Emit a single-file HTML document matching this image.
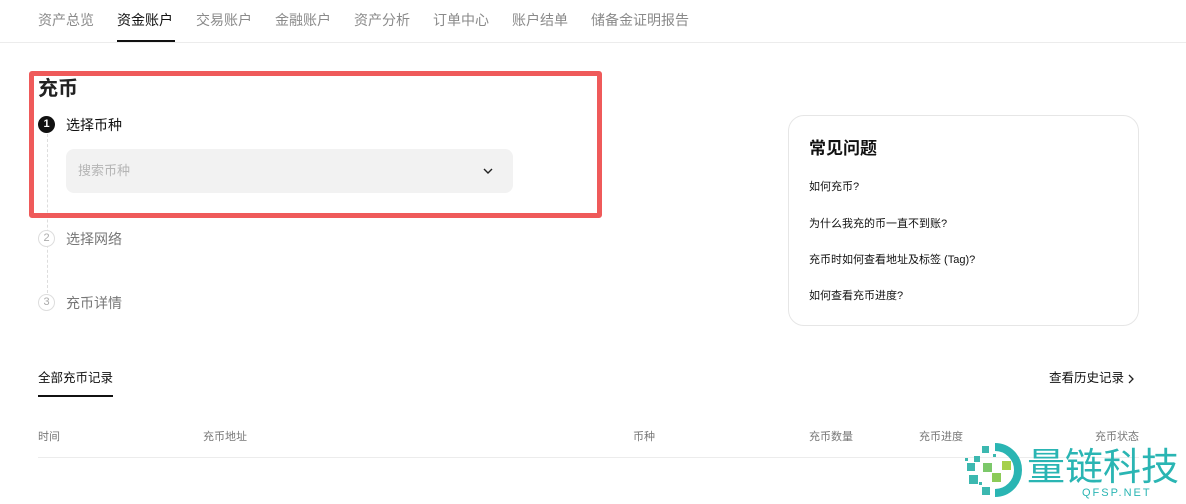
<!DOCTYPE html>
<html><head><meta charset="utf-8"><style>
*{margin:0;padding:0;box-sizing:border-box}
body{width:1186px;height:504px;background:#fff;position:relative;overflow:hidden;font-family:"Liberation Sans","Noto Sans CJK SC",sans-serif;color:#111}
.a{position:absolute;white-space:nowrap}
.nav{font-size:14px;color:#8a8a8a;top:10px;line-height:20px}
.faq{font-size:11px;left:809px;color:#111;line-height:14px}
.th{font-size:11px;color:#777;top:430px;line-height:14px}
.circ{position:absolute;width:17px;height:17px;border-radius:50%;font-size:11px;line-height:17px;text-align:center}
</style></head><body>
<div class="a nav" style="left:38px">资产总览</div>
<div class="a nav" style="left:117px;color:#111">资金账户</div>
<div class="a nav" style="left:196px">交易账户</div>
<div class="a nav" style="left:275px">金融账户</div>
<div class="a nav" style="left:354px">资产分析</div>
<div class="a nav" style="left:433px">订单中心</div>
<div class="a nav" style="left:512px">账户结单</div>
<div class="a nav" style="left:591px">储备金证明报告</div>
<div class="a" style="left:117px;top:40px;width:58px;height:2px;background:#111"></div>
<div class="a" style="left:0;top:42px;width:1186px;height:1px;background:#ececec"></div>

<div class="a" style="left:47px;top:134px;height:164px;border-left:1px dashed #ddd"></div>
<div class="a" style="left:38px;top:76px;font-size:20px;font-weight:bold;line-height:26px;color:#222">充币</div>
<div class="circ" style="left:38px;top:116px;background:#111;color:#fff;font-weight:bold">1</div>
<div class="a" style="left:66px;top:116px;font-size:14px;line-height:18px">选择币种</div>
<div class="a" style="left:66px;top:149px;width:447px;height:44px;background:#f2f2f2;border-radius:8px"></div>
<div class="a" style="left:78px;top:162px;font-size:13px;color:#b5b5b5;line-height:17px">搜索币种</div>
<svg class="a" style="left:482px;top:166px" width="12" height="10"><path d="M2 3 L6 7 L10 3" fill="none" stroke="#222" stroke-width="1.4"/></svg>
<div class="circ" style="left:38px;top:230px;border:1px solid #ddd;background:#fff;color:#aaa;line-height:15px">2</div>
<div class="a" style="left:66px;top:230px;font-size:14px;line-height:18px;color:#777">选择网络</div>
<div class="circ" style="left:38px;top:294px;border:1px solid #ddd;background:#fff;color:#aaa;line-height:15px">3</div>
<div class="a" style="left:66px;top:294px;font-size:14px;line-height:18px;color:#777">充币详情</div>
<div class="a" style="left:29px;top:71px;width:573px;height:147px;border:5px solid #ef5a5a;border-radius:3px"></div>

<div class="a" style="left:788px;top:115px;width:351px;height:211px;border:1px solid #e6e6e6;border-radius:16px"></div>
<div class="a" style="left:809px;top:138px;font-size:17px;font-weight:bold;line-height:22px">常见问题</div>
<div class="a faq" style="top:180px">如何充币?</div>
<div class="a faq" style="top:217px">为什么我充的币一直不到账?</div>
<div class="a faq" style="top:253px">充币时如何查看地址及标签 (Tag)?</div>
<div class="a faq" style="top:289px">如何查看充币进度?</div>

<div class="a" style="left:38px;top:370px;font-size:12.5px;line-height:17px">全部充币记录</div>
<div class="a" style="left:38px;top:395px;width:75px;height:2px;background:#111"></div>
<div class="a" style="left:1049px;top:370px;font-size:12.5px;line-height:17px">查看历史记录</div>
<svg class="a" style="left:1127px;top:373px" width="9" height="12"><path d="M2 2 L6 6 L2 10" fill="none" stroke="#222" stroke-width="1.3"/></svg>

<div class="a th" style="left:38px">时间</div>
<div class="a th" style="left:203px">充币地址</div>
<div class="a th" style="left:633px">币种</div>
<div class="a th" style="left:809px">充币数量</div>
<div class="a th" style="left:919px">充币进度</div>
<div class="a th" style="left:1095px">充币状态</div>
<div class="a" style="left:38px;top:457px;width:1101px;height:1px;background:#ececec"></div>

<svg class="a" style="left:962px;top:442px" width="62" height="58">
<path d="M33 5 A23 23 0 0 1 33 51" fill="none" stroke="#2ab5b3" stroke-width="8"/>
<rect x="20" y="4" width="7" height="7" fill="#3cb8b0"/>
<rect x="12" y="14" width="6" height="6" fill="#3cb8b0"/>
<rect x="5" y="21" width="8" height="8" fill="#3cb8b0"/>
<rect x="21" y="21" width="9" height="9" fill="#7cc86a"/>
<rect x="40" y="19" width="9" height="9" fill="#a6d04a"/>
<rect x="7" y="33" width="9" height="9" fill="#3cb8b0"/>
<rect x="30" y="31" width="9" height="9" fill="#8ccb58"/>
<rect x="20" y="45" width="8" height="8" fill="#3cb8b0"/>
<rect x="3" y="16" width="3" height="3" fill="#3cb8b0"/>
<rect x="17" y="40" width="3" height="3" fill="#3cb8b0"/>
<rect x="31" y="12" width="3" height="3" fill="#3cb8b0"/>
</svg>
<div class="a" style="left:1027px;top:441px;font-size:38px;line-height:46px;color:#2ab5b3;font-family:'Noto Sans CJK SC',sans-serif">量链科技</div>
<div class="a" style="left:1082px;top:486px;font-size:11px;letter-spacing:2px;color:#2ab5b3;line-height:14px">QFSP.NET</div>
</body></html>
